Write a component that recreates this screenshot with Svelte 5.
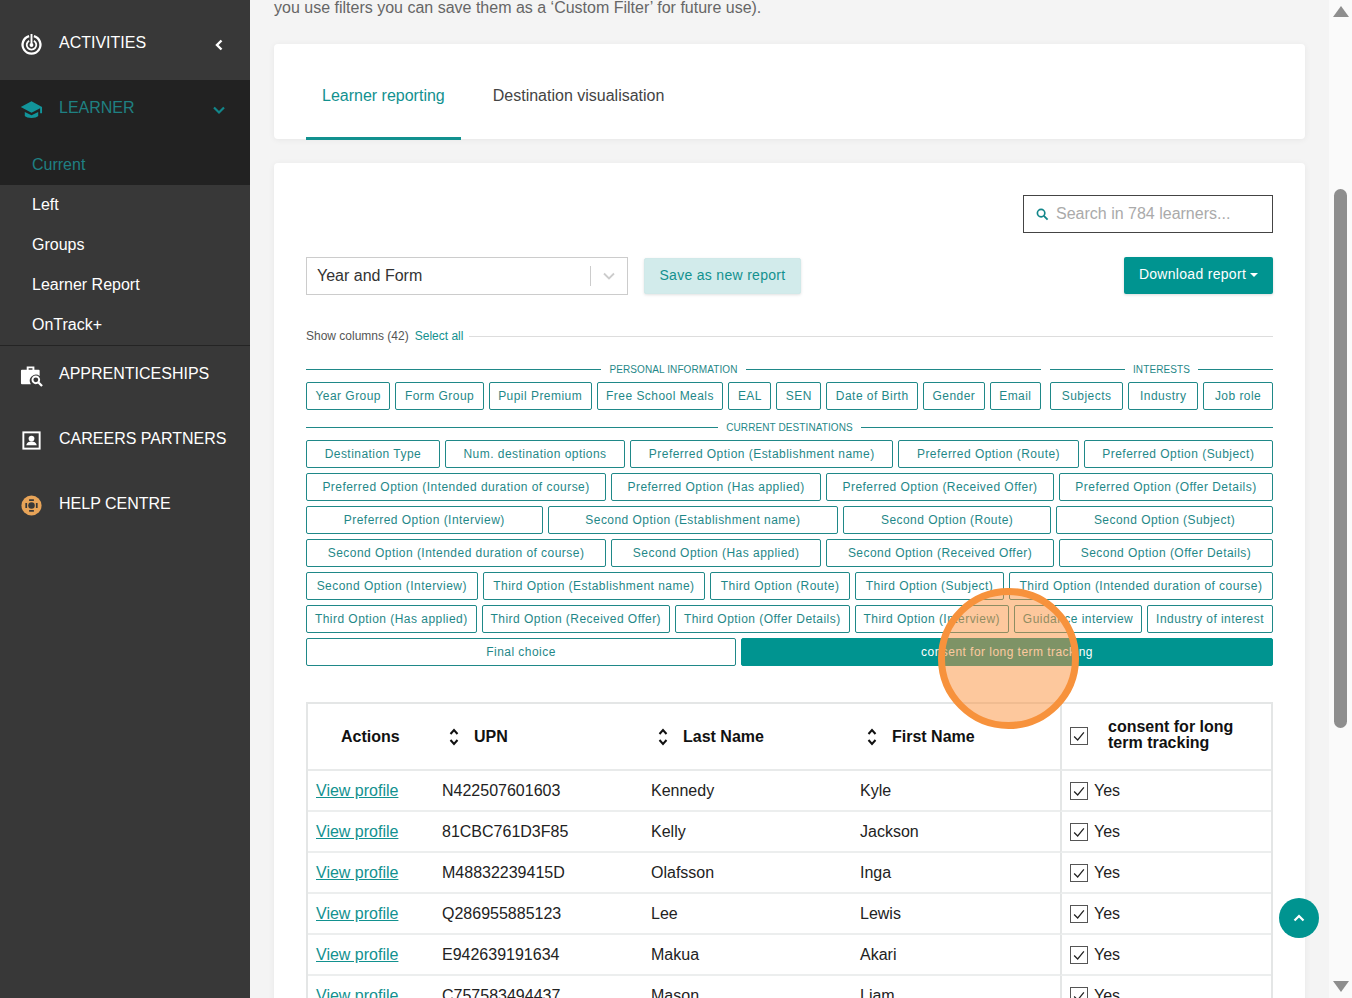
<script>
  const subItems = ["Left", "Groups", "Learner Report", "OnTrack+"];

  const personal = ["Year Group", "Form Group", "Pupil Premium", "Free School Meals", "EAL", "SEN", "Date of Birth", "Gender", "Email"];
  const interests = ["Subjects", "Industry", "Job role"];

  const destinationRows = [
    ["Destination Type", "Num. destination options", "Preferred Option (Establishment name)", "Preferred Option (Route)", "Preferred Option (Subject)"],
    ["Preferred Option (Intended duration of course)", "Preferred Option (Has applied)", "Preferred Option (Received Offer)", "Preferred Option (Offer Details)"],
    ["Preferred Option (Interview)", "Second Option (Establishment name)", "Second Option (Route)", "Second Option (Subject)"],
    ["Second Option (Intended duration of course)", "Second Option (Has applied)", "Second Option (Received Offer)", "Second Option (Offer Details)"],
    ["Second Option (Interview)", "Third Option (Establishment name)", "Third Option (Route)", "Third Option (Subject)", "Third Option (Intended duration of course)"],
    ["Third Option (Has applied)", "Third Option (Received Offer)", "Third Option (Offer Details)", "Third Option (Interview)", "Guidance interview", "Industry of interest"]
  ];

  const learners = [
    ["N422507601603", "Kennedy", "Kyle"],
    ["81CBC761D3F85", "Kelly", "Jackson"],
    ["M48832239415D", "Olafsson", "Inga"],
    ["Q286955885123", "Lee", "Lewis"],
    ["E942639191634", "Makua", "Akari"],
    ["C757583494437", "Mason", "Liam"]
  ];
</script>

{#snippet sortIcon()}
  <svg class="sort" viewBox="0 0 10 20" width="10" height="20">
    <path d="M1.5 7 5 3l3.5 4M1.5 13 5 17l3.5-4" fill="none" stroke="#111" stroke-width="2" />
  </svg>
{/snippet}

{#snippet tick()}
  <span class="check">
    <svg viewBox="0 0 18 18" width="16" height="16">
      <path d="M3.5 9.5 7.5 13.5 14.5 5" fill="none" stroke="#222" stroke-width="1.4" />
    </svg>
  </span>
{/snippet}

<div class="page">
  <aside class="sidebar">
    <div class="nav-item activities">
      <svg class="nav-icon" viewBox="0 0 24 24" width="24" height="24">
        <path d="M14.500 3.300A9.300 9.300 0 1 1 9.500 3.300" fill="none" stroke="#fff" stroke-width="2.400" />
        <path d="M14.500 8A5 5 0 1 1 9.500 8" fill="none" stroke="#fff" stroke-width="1.900" />
        <path d="M12 1v10" stroke="#fff" stroke-width="2" />
        <circle cx="12" cy="12.500" r="2" fill="#fff" />
      </svg>
      <span>ACTIVITIES</span>
      <svg class="caret" viewBox="0 0 12 12" width="12" height="12">
        <path d="M8.5 1.5 4 6l4.500 4.500" fill="none" stroke="#fff" stroke-width="2.4" />
      </svg>
    </div>

    <div class="learner">
      <div class="nav-item learner-head">
        <svg class="nav-icon" viewBox="0 0 24 24" width="24" height="24">
          <path d="M12 3.500 0.800 9.500 12 15.500l9-4.800V16h2V9.500z" fill="#12949a" />
          <path d="M5 14.500v4.400c2 2.600 12 2.600 14 0v-4.400L12 18z" fill="#12949a" />
        </svg>
        <span>LEARNER</span>
        <svg class="caret" viewBox="0 0 12 12" width="12" height="12">
          <path d="M1 3.500 6 8.500l5-5" fill="none" stroke="#12868a" stroke-width="2.2" />
        </svg>
      </div>
      <div class="sub-item current">Current</div>
    </div>

    {#each subItems as item}
      <div class="sub-item">{item}</div>
    {/each}

    <div class="nav-divider"></div>

    <div class="nav-item first-after">
      <svg class="nav-icon" viewBox="0 0 24 24" width="24" height="24">
        <path d="M7 6V2.500h8V6h4.500a1 1 0 0 1 1 1v5.400a6.400 6.400 0 0 0-9.200 8.600H2a1 1 0 0 1-1-1V7a1 1 0 0 1 1-1zm2 0h4V4.500H9z" fill="#fff" fill-rule="evenodd" />
        <circle cx="16.500" cy="16.500" r="3.500" fill="none" stroke="#fff" stroke-width="2" />
        <path d="m19 19 4 4" stroke="#fff" stroke-width="2.400" />
      </svg>
      <span>APPRENTICESHIPS</span>
    </div>

    <div class="nav-item">
      <svg class="nav-icon" viewBox="0 0 24 24" width="24" height="24">
        <rect x="3.500" y="3.500" width="17" height="17" fill="none" stroke="#fff" stroke-width="2" />
        <circle cx="12" cy="10" r="3" fill="#fff" />
        <path d="M6.500 17c.5-3 3-4 5.500-4s5 1 5.500 4z" fill="#fff" />
      </svg>
      <span>CAREERS PARTNERS</span>
    </div>

    <div class="nav-item">
      <svg class="nav-icon" viewBox="0 0 24 24" width="24" height="24">
        <circle cx="12" cy="12" r="10.500" fill="#e8a458" />
        <circle cx="12" cy="12" r="3.400" fill="#383838" />
        <path d="M9.500 6.500h5M9.500 17.500h5M6.500 9.500v5M17.500 9.500v5" stroke="#383838" stroke-width="1.800" />
      </svg>
      <span>HELP CENTRE</span>
    </div>
  </aside>

  <main class="main">
    <p class="intro">you use filters you can save them as a ‘Custom Filter’ for future use).</p>

    <section class="card tabs">
      <div class="tab active">Learner reporting</div>
      <div class="tab">Destination visualisation</div>
    </section>

    <section class="card report">
      <div class="search-row">
        <div class="search">
          <svg viewBox="0 0 14 14" width="13" height="13">
            <circle cx="5.500" cy="5.500" r="4" fill="none" stroke="#12868a" stroke-width="1.800" />
            <path d="m8.500 8.500 4 4" stroke="#12868a" stroke-width="2" />
          </svg>
          <span>Search in 784 learners...</span>
        </div>
      </div>

      <div class="controls">
        <div class="select">
          <span class="select-value">Year and Form</span>
          <span class="select-sep"></span>
          <svg viewBox="0 0 12 8" width="12" height="8">
            <path d="M1 1.500 6 6.500l5-5" fill="none" stroke="#ccc" stroke-width="1.800" />
          </svg>
        </div>
        <button class="save">Save as new report</button>
        <button class="download">Download report<i class="down-caret"></i></button>
      </div>

      <div class="columns-head">
        <span class="show">Show columns (42)</span>
        <span class="select-all">Select all</span>
        <span class="rule grey"></span>
      </div>

      <div class="group-row">
        <div class="group personal">
          <div class="legend"><span class="rule"></span><span>PERSONAL INFORMATION</span><span class="rule"></span></div>
          <div class="chips">
            {#each personal as chip}
              <span class="chip">{chip}</span>
            {/each}
          </div>
        </div>
        <div class="group interests">
          <div class="legend"><span class="rule"></span><span>INTERESTS</span><span class="rule"></span></div>
          <div class="chips">
            {#each interests as chip}
              <span class="chip">{chip}</span>
            {/each}
          </div>
        </div>
      </div>

      <div class="legend destinations"><span class="rule"></span><span>CURRENT DESTINATIONS</span><span class="rule"></span></div>
      {#each destinationRows as row}
        <div class="chips stacked">
          {#each row as chip}
            <span class="chip">{chip}</span>
          {/each}
        </div>
      {/each}
      <div class="chips stacked even">
        <span class="chip">Final choice</span>
        <span class="chip selected">consent for long term tracking</span>
      </div>

      <table>
        <colgroup>
          <col style="width: 126px" />
          <col style="width: 209px" />
          <col style="width: 209px" />
          <col style="width: 208px" />
          <col />
        </colgroup>
        <thead>
          <tr>
            <th class="actions">Actions</th>
            <th><span class="th-inner">{@render sortIcon()}UPN</span></th>
            <th><span class="th-inner">{@render sortIcon()}Last Name</span></th>
            <th><span class="th-inner">{@render sortIcon()}First Name</span></th>
            <th class="consent"><span class="th-consent">{@render tick()}<span>consent for long term tracking</span></span></th>
          </tr>
        </thead>
        <tbody>
          {#each learners as learner}
            <tr>
              <td class="link-cell"><span class="link">View profile</span></td>
              {#each learner as value}
                <td>{value}</td>
              {/each}
              <td class="consent"><span class="yes">{@render tick()}Yes</span></td>
            </tr>
          {/each}
        </tbody>
      </table>
    </section>

    <div class="to-top">
      <svg viewBox="0 0 12 8" width="12" height="8">
        <path d="M1.500 6.500 6 2l4.500 4.500" fill="none" stroke="#fff" stroke-width="2.200" />
      </svg>
    </div>
    <div class="spotlight"></div>
  </main>

  <div class="scrollbar">
    <span class="arrow up"></span>
    <span class="thumb"></span>
    <span class="arrow dn"></span>
  </div>
</div>

<style>
  :global(body) {
    margin: 0;
    font-family: "Liberation Sans", Arial, sans-serif;
    color: #333;
  }

  .page {
    display: flex;
    width: 1352px;
    height: 998px;
    overflow: hidden;
    background: #f4f4f4;
  }

  .sidebar {
    flex: 0 0 250px;
    background: #383838;
    color: #fff;
  }

  .nav-item {
    display: flex;
    align-items: center;
    height: 65px;
    padding-left: 20px;
    font-size: 16px;
    box-sizing: border-box;
  }

  .nav-icon {
    flex: none;
    width: 23px;
    height: 23px;
    margin-right: 16px;
    position: relative;
    top: 2px;
  }

  .nav-item span {
    flex: 1;
  }

  .caret {
    margin-right: 25px;
    position: relative;
    top: 2px;
  }

  .activities {
    height: 80px;
    padding-top: 5px;
  }

  .learner {
    background: #222;
    height: 105px;
    color: #1f8082;
  }

  .learner-head {
    height: 55px;
  }

  .sub-item {
    height: 40px;
    line-height: 40px;
    padding-left: 32px;
    font-size: 16px;
    box-sizing: border-box;
  }

  .current {
    margin-top: 10px;
  }

  .nav-divider {
    height: 1px;
    background: #242424;
  }

  .first-after {
    height: 60px;
    padding-bottom: 5px;
    margin-bottom: 0;
  }

  .main {
    position: relative;
    flex: 0 0 1079px;
    min-width: 0;
    box-sizing: border-box;
    padding: 0 24px;
    background: #f4f4f4;
  }

  .intro {
    margin: 0 0 28px;
    height: 16px;
    line-height: 16px;
    font-size: 16px;
    color: #666;
  }

  .card {
    background: #fff;
    border-radius: 4px;
    box-shadow: 0 1px 6px rgba(0, 0, 0, 0.06);
  }

  .tabs {
    display: flex;
    height: 95px;
    padding-left: 32px;
    margin-bottom: 24px;
    box-sizing: border-box;
  }

  .tab {
    padding: 0 16px;
    margin-right: 16px;
    line-height: 104px;
    font-size: 16px;
    color: #444;
    box-sizing: border-box;
  }

  .tab.active {
    color: #12918f;
    border-bottom: 3px solid #12918f;
    height: 96px;
  }

  .report {
    padding: 32px 32px 0;
    height: 900px;
    box-sizing: border-box;
  }

  .search-row {
    display: flex;
    justify-content: flex-end;
    margin-bottom: 24px;
  }

  .search {
    display: flex;
    align-items: center;
    gap: 7px;
    width: 250px;
    height: 38px;
    padding-left: 12px;
    border: 1px solid #444;
    box-sizing: border-box;
    font-size: 16px;
    color: #aaa;
  }

  .controls {
    display: flex;
    align-items: flex-start;
    height: 38px;
  }

  .select {
    display: flex;
    align-items: center;
    width: 322px;
    height: 38px;
    padding: 0 12px 0 10px;
    border: 1px solid #ccc;
    box-sizing: border-box;
    font-size: 16px;
  }

  .select-value {
    flex: 1;
  }

  .select-sep {
    width: 1px;
    height: 20px;
    background: #ccc;
    margin-right: 12px;
  }

  button {
    font: inherit;
    border-radius: 2px;
    box-sizing: border-box;
    cursor: pointer;
  }

  .save {
    margin: 1px 0 0 16px;
    width: 157px;
    height: 36px;
    padding: 0 0 2px;
    border: 1px solid #d0e9e9;
    background: #d2ebeb;
    color: #12918f;
    font-size: 14px;
    letter-spacing: 0.3px;
    box-shadow: 0 1px 3px rgba(0, 0, 0, 0.12);
  }

  .download {
    margin-left: auto;
    width: 149px;
    height: 37px;
    padding: 0 0 3px;
    border: 0;
    background: #009490;
    color: #fff;
    font-size: 14px;
    letter-spacing: 0.3px;
    box-shadow: 0 1px 3px rgba(0, 0, 0, 0.15);
  }

  .down-caret {
    display: inline-block;
    margin-left: 4px;
    vertical-align: 2px;
    border-top: 4px solid #fff;
    border-left: 4px solid transparent;
    border-right: 4px solid transparent;
  }

  .columns-head {
    display: flex;
    align-items: center;
    gap: 6px;
    height: 14px;
    margin-top: 34px;
    font-size: 12px;
    color: #555;
  }

  .select-all {
    color: #12918f;
  }

  .rule {
    flex: 1;
    height: 1px;
    background: #1f8888;
  }

  .rule.grey {
    background: #ddd;
  }

  .group-row {
    display: flex;
    gap: 9px;
    margin-top: 19px;
  }

  .personal {
    flex: 0 0 735px;
  }

  .interests {
    flex: 1;
  }

  .legend {
    display: flex;
    align-items: center;
    gap: 8px;
    height: 14px;
    font-size: 10px;
    letter-spacing: 0.1px;
    color: #1f8888;
  }

  .chips {
    display: flex;
    gap: 5px;
    margin-top: 6px;
  }

  .chip {
    flex: 1 1 auto;
    height: 28px;
    line-height: 26px;
    padding: 0 7.5px;
    border: 1px solid #1f8888;
    border-radius: 2px;
    box-sizing: border-box;
    font-size: 12px;
    letter-spacing: 0.46px;
    text-align: center;
    white-space: nowrap;
    color: #1f8888;
  }

  .destinations {
    margin-top: 10px;
  }

  .stacked {
    margin-top: 5px;
  }

  .destinations + .stacked {
    margin-top: 6px;
  }

  .even .chip {
    flex: 1 1 0;
  }

  .even .chip:first-child {
    flex: 0 0 430px;
  }

  .chip.selected {
    border-color: #009490;
    background: #009490;
    color: #fff;
  }

  table {
    width: 967px;
    margin-top: 36px;
    table-layout: fixed;
    border-collapse: separate;
    border-spacing: 0;
    border: 2px solid #e4e6e6;
    border-bottom: 0;
    font-size: 16px;
    color: #222;
  }

  th {
    height: 65px;
    padding: 0 0 0 8px;
    text-align: left;
    border-bottom: 2px solid #e8eaea;
    font-size: 16px;
    color: #111;
  }

  th.actions {
    padding-left: 33px;
  }

  .th-inner {
    display: flex;
    align-items: center;
    gap: 15px;
    padding-left: 7px;
  }

  .sort {
    flex: none;
  }

  .th-consent {
    display: flex;
    align-items: center;
    gap: 20px;
    padding-bottom: 2px;
    line-height: 16px;
  }

  .th-consent > span:last-child {
    width: 140px;
    margin-bottom: 2px;
  }

  td {
    height: 39px;
    padding: 0 0 0 8px;
    border-bottom: 2px solid #eceeee;
    white-space: nowrap;
  }

  .consent {
    border-left: 2px solid #e4e6e6;
  }

  .link {
    color: #12918f;
    text-decoration: underline;
  }

  .yes {
    display: flex;
    align-items: center;
    gap: 6px;
  }

  .check {
    flex: none;
    display: inline-flex;
    align-items: center;
    justify-content: center;
    width: 18px;
    height: 18px;
    border: 1px solid #555;
    box-sizing: border-box;
    background: #fff;
  }

  .to-top {
    position: absolute;
    left: 1029px;
    top: 898px;
    display: flex;
    align-items: center;
    justify-content: center;
    width: 40px;
    height: 40px;
    border-radius: 50%;
    background: #009490;
  }

  .spotlight {
    position: absolute;
    left: 688px;
    top: 588px;
    width: 141px;
    height: 141px;
    border: 7px solid #f7923c;
    border-radius: 50%;
    box-sizing: border-box;
    background: rgba(252, 146, 60, 0.5);
  }

  .scrollbar {
    position: relative;
    flex: 0 0 23px;
    background: #fafafa;
  }

  .thumb {
    position: absolute;
    left: 5px;
    top: 189px;
    width: 13px;
    height: 539px;
    border-radius: 7px;
    background: #8e8e8e;
  }

  .arrow {
    position: absolute;
    left: 4px;
    border-left: 8px solid transparent;
    border-right: 8px solid transparent;
  }

  .arrow.up {
    top: 6px;
    border-bottom: 11px solid #8e8e8e;
  }

  .arrow.dn {
    bottom: 6px;
    border-top: 11px solid #8e8e8e;
  }
</style>
